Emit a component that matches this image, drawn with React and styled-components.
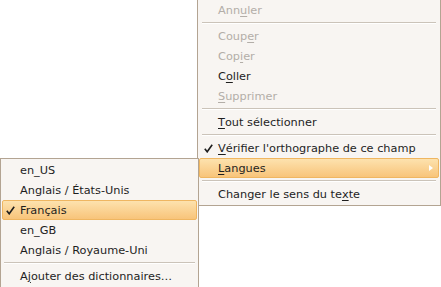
import React from 'react';
import styled, { createGlobalStyle } from 'styled-components';

const GlobalStyle = createGlobalStyle`
    html, body {
        margin: 0;
        padding: 0;
        background: #ffffff;
    }
    body {
        width: 441px;
        height: 287px;
        overflow: hidden;
        position: relative;
        font-family: "DejaVu Sans", "Liberation Sans", sans-serif;
        font-size: 11.3px;
    }
`

const Menu = styled.div`
    position: absolute;
    left: ${p => p.$left}px;
    top: ${p => p.$top}px;
    width: ${p => p.$width}px;
    box-sizing: border-box;
    background: #f8f5f2;
    border: 1px solid #b3a492;
    padding: 1px;
    display: flex;
    flex-direction: column;
    z-index: ${p => p.$z};
`

const Item = styled.div`
    position: relative;
    height: 20px;
    box-sizing: border-box;
    display: flex;
    align-items: center;
    padding-left: ${p => p.$indent}px;
    color: ${p => (p.$disabled ? '#b3aea8' : '#1e1e1e')};
    border: 1px solid transparent;
    border-radius: 2px;
    white-space: nowrap;
    ${p => p.$active && `
        background: linear-gradient(#fde2ae, #f8c47a);
        border-color: #efb661;
    `}
    u {
        text-underline-offset: 2px;
    }
`

const Check = styled.svg`
    position: absolute;
    left: ${p => p.$left}px;
    top: 5px;
`

const Arrow = styled.span`
    position: absolute;
    right: 5px;
    top: 6px;
    width: 0;
    height: 0;
    border-top: 3.5px solid transparent;
    border-bottom: 3.5px solid transparent;
    border-left: 4px solid #ffffff;
`

const Separator = styled.div`
    height: 6px;
    display: flex;
    align-items: center;
    padding: 0 ${p => p.$inset}px;
    &::after {
        content: '';
        flex: 1;
        height: 1px;
        background: #cbc3b9;
        border-bottom: 1px solid #ffffff;
    }
`

function Tick({ left }) {
    return (
        <Check $left={left} width="9" height="9" viewBox="0 0 9 9">
            <path d="M0.8 4.8 L3.2 7.8 L8.2 0.8" fill="none" stroke="#1e1e1e" strokeWidth="1.6" />
        </Check>
    )
}

function App() {
    return (
        <>
            <GlobalStyle />
            <Menu $left={197} $top={-2} $width={244} $z={1}>
                <Item $indent={18} $disabled>Ann<u>u</u>ler</Item>
                <Separator $inset={3} />
                <Item $indent={18} $disabled>Coup<u>e</u>r</Item>
                <Item $indent={18} $disabled>Cop<u>i</u>er</Item>
                <Item $indent={18}>C<u>o</u>ller</Item>
                <Item $indent={18} $disabled><u>S</u>upprimer</Item>
                <Separator $inset={3} />
                <Item $indent={18}><u>T</u>out sélectionner</Item>
                <Separator $inset={3} />
                <Item $indent={18}><Tick left={4} /><u>V</u>érifier l'orthographe de ce champ</Item>
                <Item $indent={18} $active><u>L</u>angues<Arrow /></Item>
                <Separator $inset={3} />
                <Item $indent={18}>Changer le sens du te<u>x</u>te</Item>
            </Menu>
            <Menu $left={0} $top={158} $width={199} $z={2}>
                <Item $indent={17}>en_US</Item>
                <Item $indent={17}>Anglais / États-Unis</Item>
                <Item $indent={17} $active><Tick left={3} />Français</Item>
                <Item $indent={17}>en_GB</Item>
                <Item $indent={17}>Anglais / Royaume-Uni</Item>
                <Separator $inset={2} />
                <Item $indent={17}>A<u>j</u>outer des dictionnaires…</Item>
            </Menu>
        </>
    )
}

export default App
